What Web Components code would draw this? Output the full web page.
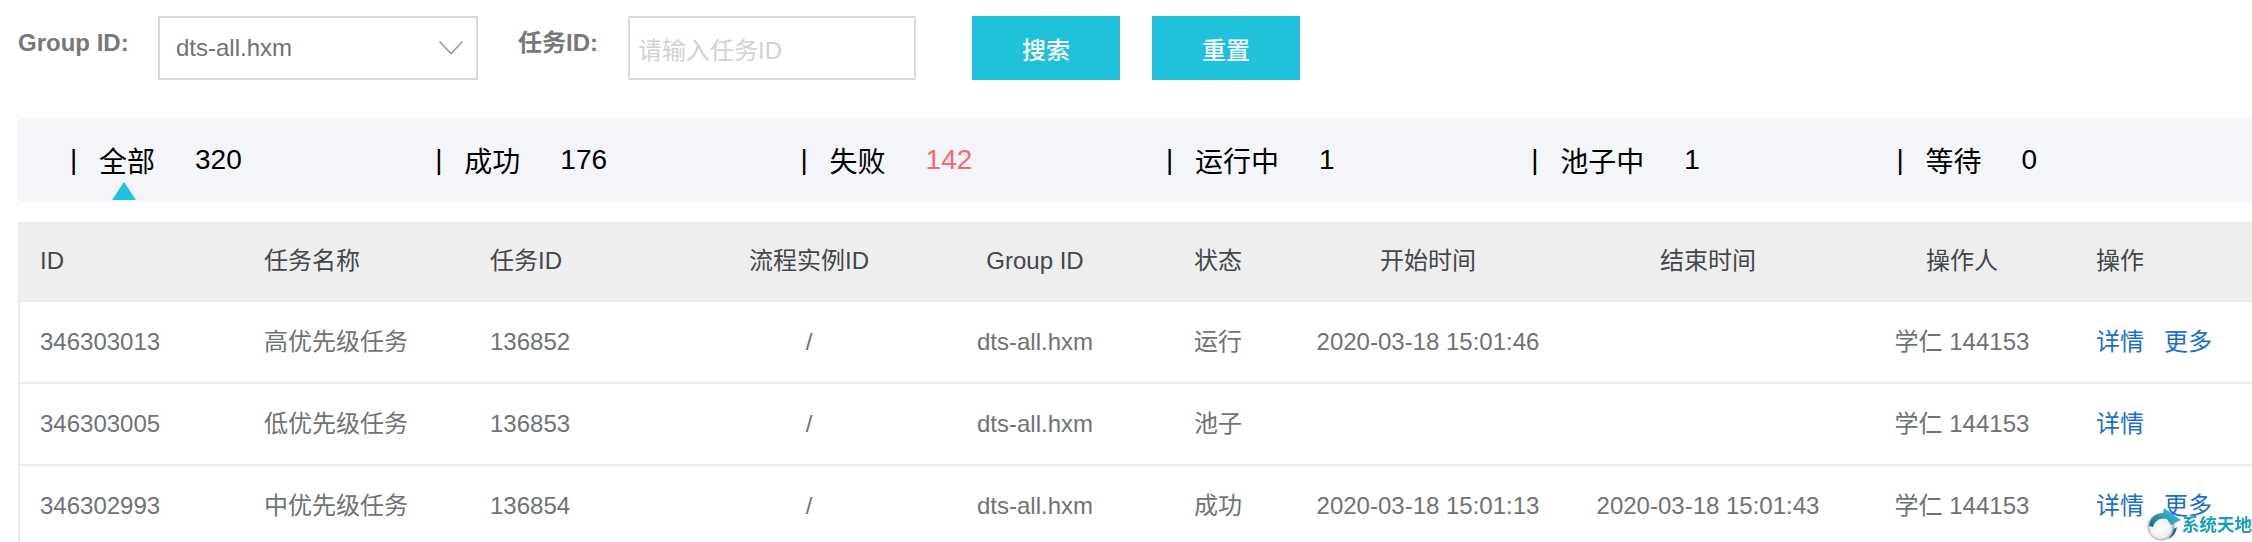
<!DOCTYPE html>
<html lang="zh">
<head>
<meta charset="utf-8">
<title>任务列表</title>
<style>
    html, body {
        margin: 0;
        height: 542px;
        overflow: hidden;
        background: #fff;
        font-family: "Liberation Sans", "Noto Sans CJK SC", sans-serif;
    }
</style>
</head>
<body>
<task-filter>
    <filter-field label="Group ID:" label-width="140">
        <filter-select value="dts-all.hxm"></filter-select>
    </filter-field>
    <filter-field label="任务ID:" label-width="110" style="margin-left:40px">
        <filter-input placeholder="请输入任务ID"></filter-input>
    </filter-field>
    <filter-button style="margin-left:56px">搜索</filter-button>
    <filter-button style="margin-left:32px">重置</filter-button>
</task-filter>

<stat-bar>
    <stat-item label="全部" count="320" active></stat-item>
    <stat-item label="成功" count="176"></stat-item>
    <stat-item label="失败" count="142" alert></stat-item>
    <stat-item label="运行中" count="1"></stat-item>
    <stat-item label="池子中" count="1"></stat-item>
    <stat-item label="等待" count="0"></stat-item>
</stat-bar>

<task-table>
    <task-row head>
        <task-cell>ID</task-cell><task-cell>任务名称</task-cell><task-cell>任务ID</task-cell>
        <task-cell center>流程实例ID</task-cell><task-cell center>Group ID</task-cell><task-cell>状态</task-cell>
        <task-cell center>开始时间</task-cell><task-cell center>结束时间</task-cell><task-cell center>操作人</task-cell>
        <task-cell>操作</task-cell>
    </task-row>
    <task-row>
        <task-cell>346303013</task-cell><task-cell>高优先级任务</task-cell><task-cell>136852</task-cell>
        <task-cell center>/</task-cell><task-cell center>dts-all.hxm</task-cell><task-cell>运行</task-cell>
        <task-cell center>2020-03-18 15:01:46</task-cell><task-cell center></task-cell><task-cell center>学仁 144153</task-cell>
        <task-cell><op-link>详情</op-link><op-link>更多</op-link></task-cell>
    </task-row>
    <task-row>
        <task-cell>346303005</task-cell><task-cell>低优先级任务</task-cell><task-cell>136853</task-cell>
        <task-cell center>/</task-cell><task-cell center>dts-all.hxm</task-cell><task-cell>池子</task-cell>
        <task-cell center></task-cell><task-cell center></task-cell><task-cell center>学仁 144153</task-cell>
        <task-cell><op-link>详情</op-link></task-cell>
    </task-row>
    <task-row>
        <task-cell>346302993</task-cell><task-cell>中优先级任务</task-cell><task-cell>136854</task-cell>
        <task-cell center>/</task-cell><task-cell center>dts-all.hxm</task-cell><task-cell>成功</task-cell>
        <task-cell center>2020-03-18 15:01:13</task-cell><task-cell center>2020-03-18 15:01:43</task-cell><task-cell center>学仁 144153</task-cell>
        <task-cell><op-link>详情</op-link><op-link>更多</op-link></task-cell>
    </task-row>
</task-table>

<site-mark></site-mark>

<script>
// small helper, every element gets its own open shadow root
class ShadowBase extends HTMLElement {
    constructor() {
        super();
        this.attachShadow({ mode: 'open' });
    }
    connectedCallback() {
        this.render();
    }
}

class TaskFilter extends ShadowBase {
    render() {
        this.shadowRoot.innerHTML = `
            <style>
                :host {
                    display: flex;
                    align-items: flex-start;
                    padding: 16px 0 0 18px;
                    height: 118px;
                    box-sizing: border-box;
                }
            </style>
            <slot></slot>
        `;
    }
}

class FilterField extends ShadowBase {
    render() {
        this.shadowRoot.innerHTML = `
            <style>
                :host { display: flex; align-items: flex-start; }
                .label {
                    width: ${this.getAttribute('label-width')}px;
                    height: 54px;
                    line-height: 54px;
                    font-size: 24px;
                    font-weight: bold;
                    color: #787878;
                    white-space: nowrap;
                }
            </style>
            <span class="label">${this.getAttribute('label')}</span>
            <slot></slot>
        `;
    }
}

class FilterSelect extends ShadowBase {
    render() {
        this.shadowRoot.innerHTML = `
            <style>
                :host {
                    display: flex;
                    align-items: center;
                    justify-content: space-between;
                    box-sizing: border-box;
                    width: 320px;
                    height: 64px;
                    padding: 0 12px 0 16px;
                    border: 2px solid #d9d9d9;
                    font-size: 24px;
                    color: #6f7276;
                }
                svg { display: block; }
            </style>
            <span>${this.getAttribute('value')}</span>
            <svg width="26" height="16" viewBox="0 0 26 16" fill="none">
                <path d="M1.5 1.5L13 13.5L24.5 1.5" stroke="#9a9a9a" stroke-width="1.6"/>
            </svg>
        `;
    }
}

class FilterInput extends ShadowBase {
    render() {
        this.shadowRoot.innerHTML = `
            <style>
                :host {
                    display: flex;
                    align-items: center;
                    box-sizing: border-box;
                    width: 288px;
                    height: 64px;
                    padding: 0 8px;
                    border: 2px solid #d9d9d9;
                    font-size: 24px;
                    color: #d2d2d2;
                }
            </style>
            <span>${this.getAttribute('placeholder')}</span>
        `;
    }
}

class FilterButton extends ShadowBase {
    render() {
        this.shadowRoot.innerHTML = `
            <style>
                :host {
                    display: flex;
                    align-items: center;
                    justify-content: center;
                    width: 148px;
                    height: 64px;
                    background: #20c1dd;
                    color: #fff;
                    font-size: 24px;
                    font-weight: 500;
                }
            </style>
            <slot></slot>
        `;
    }
}

class StatBar extends ShadowBase {
    render() {
        this.shadowRoot.innerHTML = `
            <style>
                :host {
                    display: grid;
                    grid-template-columns: repeat(6, 365.3px);
                    align-items: stretch;
                    box-sizing: border-box;
                    height: 84px;
                    margin-left: 18px;
                    padding-left: 52px;
                    background: #f4f5f9;
                }
            </style>
            <slot></slot>
        `;
    }
}

class StatItem extends ShadowBase {
    render() {
        const count = this.getAttribute('count');
        this.shadowRoot.innerHTML = `
            <style>
                :host {
                    display: flex;
                    align-items: center;
                    position: relative;
                    font-size: 28px;
                    color: #000;
                }
                .bar { width: 29px; }
                .count { margin-left: 40px; }
                :host([alert]) .count { color: #ff666b; }
                .arrow {
                    display: none;
                    position: absolute;
                    left: 42px;
                    bottom: 2px;
                    width: 24px;
                    height: 18px;
                    background: #20c1dd;
                    clip-path: polygon(50% 0, 100% 100%, 0 100%);
                }
                :host([active]) .arrow { display: block; }
            </style>
            <span class="bar">|</span>
            <span>${this.getAttribute('label')}</span>
            <span class="count">${count}</span>
            <span class="arrow"></span>
        `;
    }
}

class TaskTable extends ShadowBase {
    render() {
        this.shadowRoot.innerHTML = `
            <style>
                :host {
                    display: block;
                    margin: 20px 0 0 18px;
                    border-left: 2px solid #e8ecf0;
                }
            </style>
            <slot></slot>
        `;
    }
}

class TaskRow extends ShadowBase {
    render() {
        this.shadowRoot.innerHTML = `
            <style>
                :host {
                    display: grid;
                    grid-template-columns: 224px 226px 252px 174px 278px 114px 280px 280px 228px 176px;
                    align-items: center;
                    box-sizing: border-box;
                    height: 82px;
                    border-bottom: 2px solid #e8ecf0;
                    color: #6f7276;
                    font-size: 24px;
                }
                :host([head]) {
                    height: 80px;
                    background: #eeeeee;
                    color: #43464a;
                }
            </style>
            <slot></slot>
        `;
    }
}

class TaskCell extends ShadowBase {
    render() {
        this.shadowRoot.innerHTML = `
            <style>
                :host {
                    display: flex;
                    gap: 20px;
                    padding: 0 20px;
                    min-width: 0;
                    white-space: nowrap;
                    line-height: 32px;
                }
                :host([center]) { justify-content: center; padding: 0; }
            </style>
            <slot></slot>
        `;
    }
}

class OpLink extends ShadowBase {
    render() {
        this.shadowRoot.innerHTML = `
            <style>
                :host { display: inline-block; color: #1a6fd0; }
            </style>
            <slot></slot>
        `;
    }
}

// the watermark that sits over the corner of the screenshot
class SiteMark extends ShadowBase {
    render() {
        this.shadowRoot.innerHTML = `
            <style>
                :host {
                    position: fixed;
                    right: 0;
                    bottom: 1px;
                    display: flex;
                    align-items: center;
                }
                svg { display: block; }
                span {
                    margin-left: -1px;
                    padding-top: 2px;
                    font-size: 17.5px;
                    line-height: 20px;
                    font-weight: bold;
                    color: #1c9fb6;
                    white-space: nowrap;
                }
            </style>
            <svg width="36" height="34" viewBox="0 0 36 34">
                <defs>
                    <radialGradient id="ball" cx="48%" cy="52%" r="58%">
                        <stop offset="0" stop-color="#ffffff"/>
                        <stop offset="0.65" stop-color="#eeeeee"/>
                        <stop offset="1" stop-color="#77797a"/>
                    </radialGradient>
                    <linearGradient id="swirl" x1="0" y1="1" x2="1" y2="0.3">
                        <stop offset="0" stop-color="#136f84"/>
                        <stop offset="1" stop-color="#3cc6dd"/>
                    </linearGradient>
                </defs>
                <circle cx="14" cy="20" r="13.500" fill="url(#ball)"/>
                <path d="M2 19C3 11 9 6 16 6L17 1L34 13L24 18L20 12C14 10 8 13 6 20Z" fill="url(#swirl)"/>
                <path d="M21 32C26 30 29 26 30 20L26.500 22C26 26 24 29 21 32Z" fill="#17738a"/>
            </svg>
            <span>系统天地</span>
        `;
    }
}

customElements.define('task-filter', TaskFilter);
customElements.define('filter-field', FilterField);
customElements.define('filter-select', FilterSelect);
customElements.define('filter-input', FilterInput);
customElements.define('filter-button', FilterButton);
customElements.define('stat-bar', StatBar);
customElements.define('stat-item', StatItem);
customElements.define('task-table', TaskTable);
customElements.define('task-row', TaskRow);
customElements.define('task-cell', TaskCell);
customElements.define('op-link', OpLink);
customElements.define('site-mark', SiteMark);
</script>
</body>
</html>
